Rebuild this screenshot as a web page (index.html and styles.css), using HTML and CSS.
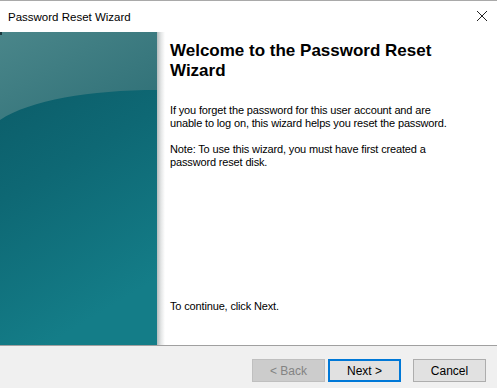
FILE: index.html
```html
<!DOCTYPE html>
<html>
<head>
  <meta charset="UTF-8">
  <title>Password Reset Wizard</title>
  <link rel="stylesheet" href="styles.css">
</head>
<body>
  <div class="window">
    <div class="titlebar">
      <div class="title">Password Reset Wizard</div>
      <svg class="close" width="12" height="12" viewBox="0 0 12 12">
        <path d="M1 1 L11 11 M11 1 L1 11" stroke="#222" stroke-width="1" fill="none"/>
      </svg>
    </div>

    <div class="main">
      <div class="side">
        <svg width="157" height="313" viewBox="0 0 157 313">
          <defs>
            <linearGradient id="low" x1="0" y1="0" x2="0.3" y2="1">
              <stop offset="0" stop-color="#0b5864"/>
              <stop offset="0.5" stop-color="#0e6874"/>
              <stop offset="1" stop-color="#147d88"/>
            </linearGradient>
            <linearGradient id="high" x1="0" y1="0" x2="1" y2="1">
              <stop offset="0" stop-color="#4a868a"/>
              <stop offset="1" stop-color="#2e6f76"/>
            </linearGradient>
          </defs>
          <rect width="157" height="313" fill="url(#low)"/>
          <path d="M0 0 L157 0 L157 58 C 90 58, 30 68, 0 88 Z" fill="url(#high)"/>
          <rect x="0" y="0" width="2" height="3" fill="#1a3a40"/>
        </svg>
      </div>
      <div class="shade"></div>
      <div class="content">
        <div class="heading">Welcome to the Password Reset Wizard</div>
        <p class="text first">If you forget the password for this user account and are unable to log on, this wizard helps you reset the password.</p>
        <p class="text">Note: To use this wizard, you must have first created a password reset disk.</p>
        <p class="text last">To continue, click Next.</p>
      </div>
    </div>

    <div class="footer">
      <button class="btn disabled">&lt; Back</button>
      <button class="btn default">Next &gt;</button>
      <button class="btn cancel">Cancel</button>
    </div>
  </div>
</body>
</html>
```

FILE: styles.css
```css
body {
  margin: 0;
  font-family: "Liberation Sans", Arial, sans-serif;
  background: #fff;
}

.window {
  width: 497px;
  height: 388px;
  box-sizing: border-box;
  border-top: 1px solid #a9a9a9;
  display: flex;
  flex-direction: column;
  overflow: hidden;
}

.titlebar {
  height: 31px;
  display: flex;
  align-items: center;
  justify-content: space-between;
  padding: 0 9px 0 8px;
  background: #fff;
}

.title {
  font-size: 11.5px;
  color: #000;
  margin-top: 1px;
}

.close {
  display: block;
  margin-top: -1px;
}

.main {
  height: 313px;
  display: flex;
}

.side {
  width: 157px;
  flex: none;
}

.side svg {
  display: block;
}

.shade {
  width: 8px;
  flex: none;
  background: linear-gradient(to right, #b4bcbd, #e4e6e6 50%, #fff);
}

.content {
  flex: 1;
  display: flex;
  flex-direction: column;
  padding: 9px 20px 32px 5px;
}

.heading {
  font-size: 17px;
  font-weight: bold;
  line-height: 20px;
  color: #000;
  width: 300px;
}

.text {
  font-size: 11px;
  line-height: 13px;
  letter-spacing: -0.15px;
  color: #000;
  margin: 13px 0 0;
  width: 295px;
}

.text.first {
  margin-top: 23px;
}

.text.last {
  margin-top: auto;
}

.footer {
  flex: 1;
  background: #f0f0f0;
  border-top: 1px solid #a0a0a0;
  display: flex;
  justify-content: flex-end;
  align-items: flex-start;
  padding: 13px 11px 0 0;
}

.btn {
  width: 73px;
  height: 23px;
  box-sizing: border-box;
  border: 1px solid #adadad;
  background: #e1e1e1;
  font-family: "Liberation Sans", Arial, sans-serif;
  font-size: 12px;
  color: #000;
  padding: 0;
}

.btn.disabled {
  background: #cccccc;
  border-color: #bfbfbf;
  color: #838383;
}

.btn.default {
  margin-left: 3px;
  border: 2px solid #0078d7;
}

.btn.cancel {
  margin-left: 12px;
}
```
